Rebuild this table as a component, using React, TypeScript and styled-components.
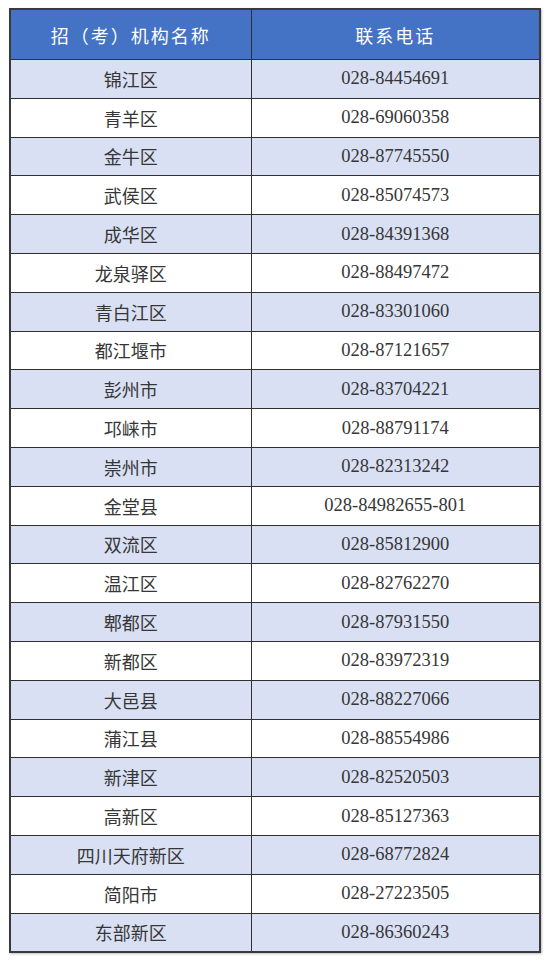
import React from 'react';
import styled, { createGlobalStyle } from 'styled-components';

const rows: [string, string][] = [
  ['锦江区', '028-84454691'],
  ['青羊区', '028-69060358'],
  ['金牛区', '028-87745550'],
  ['武侯区', '028-85074573'],
  ['成华区', '028-84391368'],
  ['龙泉驿区', '028-88497472'],
  ['青白江区', '028-83301060'],
  ['都江堰市', '028-87121657'],
  ['彭州市', '028-83704221'],
  ['邛崃市', '028-88791174'],
  ['崇州市', '028-82313242'],
  ['金堂县', '028-84982655-801'],
  ['双流区', '028-85812900'],
  ['温江区', '028-82762270'],
  ['郫都区', '028-87931550'],
  ['新都区', '028-83972319'],
  ['大邑县', '028-88227066'],
  ['蒲江县', '028-88554986'],
  ['新津区', '028-82520503'],
  ['高新区', '028-85127363'],
  ['四川天府新区', '028-68772824'],
  ['简阳市', '028-27223505'],
  ['东部新区', '028-86360243'],
];

const App = () => {
  return (
    <Page>
      <GlobalStyle />
      <Table>
        <colgroup>
          <col style={{ width: 241 }} />
          <col style={{ width: 289 }} />
        </colgroup>
        <thead>
          <tr>
            <HeadCell>招（考）机构名称</HeadCell>
            <HeadCell>联系电话</HeadCell>
          </tr>
        </thead>
        <tbody>
          {rows.map(([name, phone], i) => (
            <Row key={name} $shaded={i % 2 === 0}>
              <NameCell>{name}</NameCell>
              <PhoneCell>{phone}</PhoneCell>
            </Row>
          ))}
        </tbody>
      </Table>
    </Page>
  );
};

export default App;

const GlobalStyle = createGlobalStyle`
  html, body {
    margin: 0;
    padding: 0;
    background: #ffffff;
  }
`;

const Page = styled.div`
  width: 549px;
  height: 963px;
  padding: 8px 0 0 9px;
  box-sizing: border-box;
  background: #ffffff;
`;

const Table = styled.table`
  width: 530px;
  table-layout: fixed;
  border-collapse: collapse;
  border: 2px solid #3a3a3a;
  box-shadow: 1px 1px 2px rgba(0, 0, 0, 0.25);
`;

const HeadCell = styled.th`
  height: 49px;
  padding: 0;
  background: #4472c4;
  color: #ffffff;
  font-family: 'Noto Sans CJK SC', sans-serif;
  font-size: 18px;
  font-weight: 400;
  letter-spacing: 2px;
  text-align: center;
  border: 1px solid #2f2f2f;
`;

const Row = styled.tr<{ $shaded: boolean }>`
  height: 38.8px;
  background: ${(p) => (p.$shaded ? '#d9e0f3' : '#ffffff')};
`;

const Cell = styled.td`
  padding: 0;
  text-align: center;
  color: #363636;
  font-size: 18px;
  border: 1px solid #2f2f2f;
`;

const NameCell = styled(Cell)`
  font-family: 'Noto Sans CJK SC', sans-serif;
  font-weight: 400;
`;

const PhoneCell = styled(Cell)`
  font-family: 'Liberation Serif', 'Noto Sans CJK SC', serif;
  font-size: 18.5px;
`;
